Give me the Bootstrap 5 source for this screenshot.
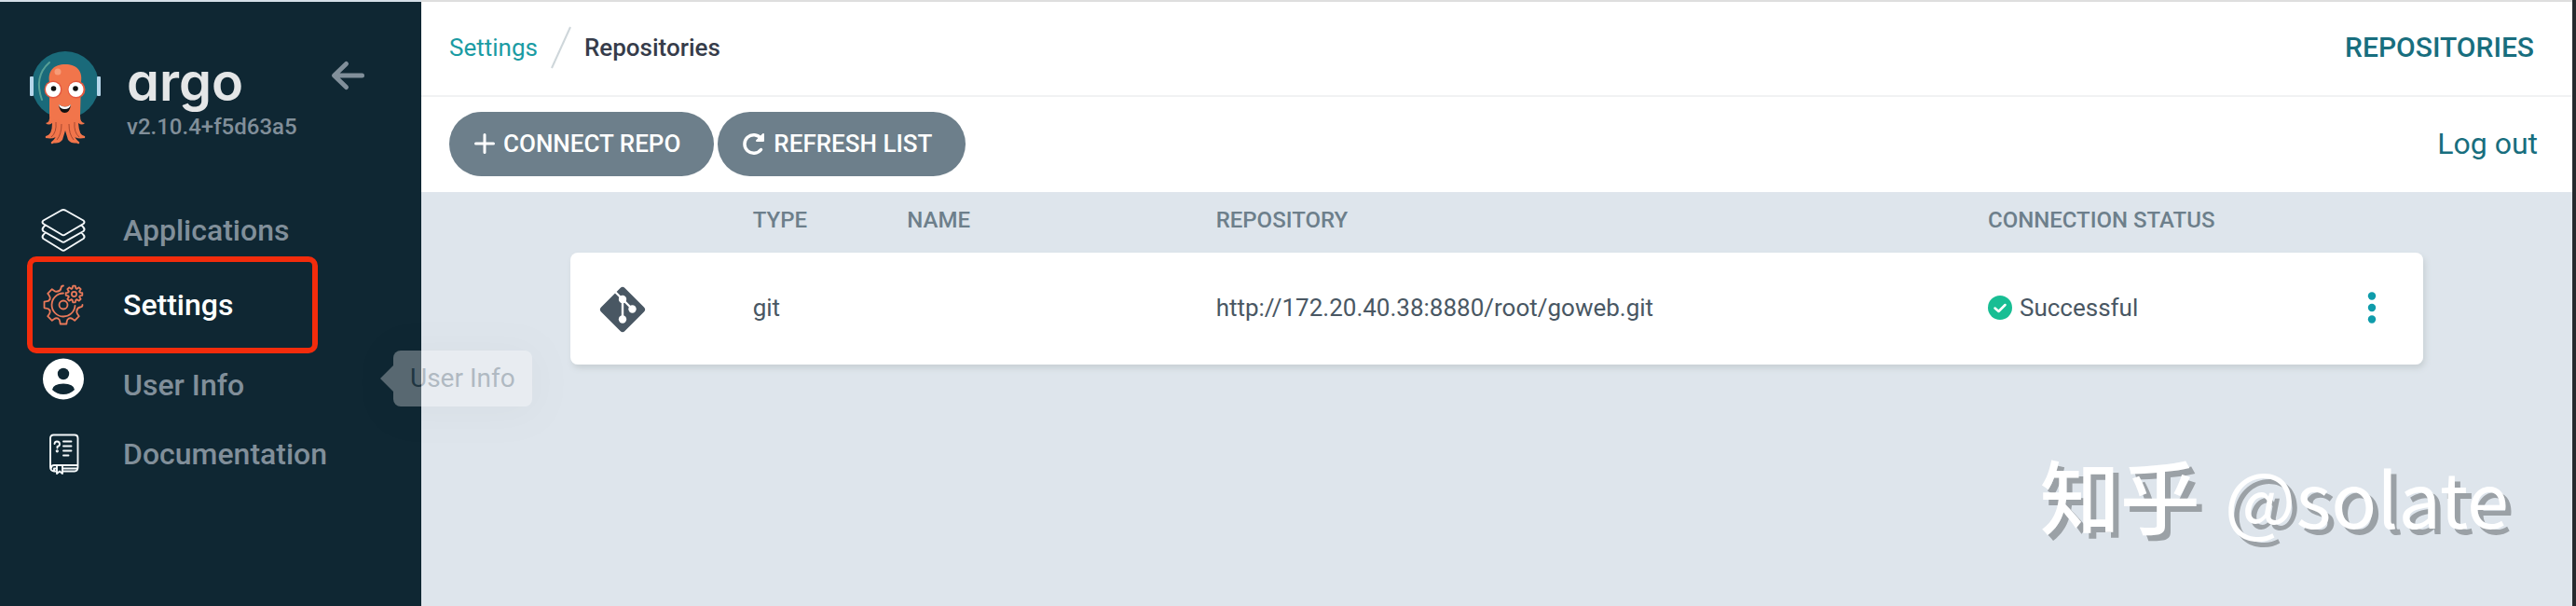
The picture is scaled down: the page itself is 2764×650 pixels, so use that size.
<!DOCTYPE html>
<html lang="en">
<head>
<meta charset="utf-8">
<meta name="viewport" content="width=device-width, initial-scale=1">
<title>Repositories - Argo CD</title>
<link rel="stylesheet" href="https://cdn.jsdelivr.net/npm/bootstrap@5.3.0/dist/css/bootstrap.min.css">
<style>
  body { font-family: Roboto, "Noto Sans CJK SC", sans-serif; font-size: 26px; line-height: 32px; color: #495763; background: #dee5ec; }
  .app-shell { border-right: 4px solid #262a2e; }
  .sidebar { width: 452px; background: #0f2733; border-top: 2px solid #d5dfe8; }
  .brand { padding: 50px 32px 0; height: 205px; gap: 28px; }
  .wordmark { font: 600 56px/64px Inter, sans-serif; font-feature-settings: "cv11"; color: #e4e6e7; padding-top: 4px; }
  .version { font-size: 24px; font-weight: 500; color: #818f9a; line-height: 32px; }
  .collapse-btn { left: 354px; top: 62px; }
  .side-link { height: 80px; padding-left: 44px; gap: 40px; font-size: 32px; font-weight: 500; color: #818f9a; text-decoration: none; }
  .side-link.active { color: #fff; }
  .side-link svg { width: 48px; height: 48px; }
  .glyph-link span { padding-top: 12px; }
  .marker { left: 29px; top: -12px; width: 312px; height: 104px; border: 6px solid #f32c0c; border-radius: 10px; pointer-events: none; }
  .hint { left: 422px; top: 9px; padding: 12px 18px; height: 60px; line-height: 36px; border-radius: 8px; background: #fff; color: #495763; opacity: .3; font-size: 28px; box-shadow: 0 4px 40px rgba(0,0,0,.1); z-index: 2; }
  .hint::before { content: ""; position: absolute; left: -14px; top: 16px; border: 14px solid transparent; border-left: 0; border-right-color: #fff; }
  .topbar { border-top: 2px solid #dedede; }
  .bar-row { background: #fff; height: 102px; padding: 0 37px 2px 30px; }
  .bar-row.crumbs { border-bottom: 2px solid #f1f2f3; padding-right: 41px; }
  .crumbs nav { gap: 14px; }
  .crumbs a { color: #1a9ba3; text-decoration: none; }
  .crumbs .here { color: #363c4a; font-weight: 500; }
  .page-name { font-size: 30px; font-weight: 500; color: #186e7e; }
  .logout { font-size: 32px; color: #186e7e; text-decoration: none; }
  .btn-argo { --bs-btn-color: #fff; --bs-btn-bg: #6d7f8b; --bs-btn-border-width: 0; --bs-btn-hover-color: #fff; --bs-btn-hover-bg: #5d6f7b; height: 69px; padding: 0 36px 0 26px; font-size: 26px; font-weight: 500; gap: 8px; }
  .content { padding: 0 160px; }
  .repos { table-layout: fixed; border-collapse: separate; border-spacing: 0; }
  .repos th { height: 65px; padding: 0 30px 6px; font-size: 24px; font-weight: 500; color: #6d7f8b; }
  .repos td { height: 120px; padding: 0 30px 2px; background: #fff; }
  .repos td:first-child { padding: 2px 31px 0; border-radius: 8px 0 0 8px; }
  .repos td:last-child { border-radius: 0 8px 8px 0; }
  .repos tbody tr { border-radius: 8px; box-shadow: 2px 4px 6px #c8d0d4; }
  .c1 { width: 8.3333%; } .c2 { width: 16.6667%; } .c5 { width: 41.6667%; } .c3 { width: 25%; }
  .kebab { padding: 0 20px; }
  .stamp { right: 68px; bottom: 58px; gap: 26px; font: 400 81px/120px "Noto Sans CJK SC", sans-serif; color: #fff; text-shadow: 6px 6px 0 #9ba1a6; }
  .stamp-site { font-size: 86px; font-weight: 500; }
</style>
</head>
<body>
<div class="app-shell d-flex min-vh-100 position-relative">
  <aside class="sidebar flex-shrink-0 position-relative">
    <div class="brand d-flex align-items-start">
      <svg width="76" height="104" viewBox="32 52 76 104" aria-label="Argo mascot">
        <circle cx="70" cy="91" r="36" fill="#1a6a7a"/>
        <rect x="32" y="82" width="4" height="21" rx="1" fill="#b6d6ea"/>
        <rect x="104" y="82" width="4" height="21" rx="1" fill="#b6d6ea"/>
        <path d="M53 67Q36 82 45 107" fill="none" stroke="#58a096" stroke-width="2" stroke-linecap="round"/>
        <path d="M53 88C51 76 58 69 70 69S89 76 87 88L86 124Q86 132 91 132Q88 135 84 132Q85 146 91 147Q87 150 80 147Q82 152 84 153Q77 155 73 150L70 140L67 150Q63 155 56 153Q60 151 60 147Q53 150 49 147Q56 145 56 132Q52 135 49 132Q54 131 53 124Z" fill="#f1754b"/>
        <path d="M58 130Q59 145 50 147M63 130Q64 148 56 153M77 130Q76 148 84 153M82 130Q81 145 90 147" fill="none" stroke="#f1754b" stroke-width="2.5" stroke-linecap="round"/>
        <path d="M60 131Q61 142 55 147M66 133Q66 144 61 150M74 133Q74 144 79 150M80 131Q79 142 85 147" fill="none" stroke="#a8482f" stroke-width="1"/>
        <circle cx="62" cy="77" r="3.5" fill="#f79b77"/>
        <circle cx="57" cy="96" r="9.500" fill="#e4583f"/><circle cx="82" cy="96" r="9.500" fill="#e4583f"/>
        <circle cx="57" cy="96" r="8" fill="#fff"/><circle cx="81.500" cy="96" r="8" fill="#fff"/>
        <circle cx="57.500" cy="95" r="2.800" fill="#111"/><circle cx="81" cy="95" r="2.800" fill="#111"/>
        <path d="M63 112Q70 117 76 112Q75 121 69.500 121Q64 121 63 112Z" fill="#111"/>
        <path d="M63 112Q70 117 76 112Q75 117 69.500 117Q64 117 63 112Z" fill="#fff"/>
      </svg>
      <div class="d-flex flex-column">
        <span class="wordmark">argo</span>
        <span class="version">v2.10.4+f5d63a5</span>
      </div>
      <button type="button" class="btn p-0 border-0 collapse-btn position-absolute lh-1" aria-label="Collapse sidebar">
        <svg width="38" height="34" viewBox="0 0 38 34" fill="none" stroke="#818f9a" stroke-width="5" stroke-linecap="round" stroke-linejoin="round"><path d="M17.500 4.500L4.500 17L17.500 29.500M5 17H34.500"/></svg>
      </button>
    </div>
    <nav>
      <a href="#" class="side-link d-flex align-items-center">
        <svg viewBox="0 0 48 48" fill="none" stroke="#f4f8fa" stroke-width="2" stroke-linejoin="round"><path d="M22 2.500Q24 1.500 26 2.500L45.500 13.500Q47.500 15 45.500 17L26 28.500Q24 30 22 28.500L2.500 17Q.5 15 2.500 13.500ZM4.500 18.200L2.500 21Q.7 23 2.500 25L22 36Q24 37.500 26 36L45.500 25Q47.500 23 45.500 21L43.500 18.200M4.500 26.500L2.500 29Q.7 31 2.500 33L22 45Q24 46.500 26 45L45.500 33Q47.500 31 45.500 29L43.500 26.500"/></svg>
        <span>Applications</span>
      </a>
      <div class="position-relative">
        <a href="#" class="side-link active d-flex align-items-center" aria-current="page">
          <svg viewBox="-24 -24 48 48" fill="none" stroke="#e9795a" stroke-width="1.800" stroke-linecap="round" stroke-linejoin="round">
            <defs>
              <path id="tooth" vector-effect="non-scaling-stroke" d="M-6 -14.500Q-4 -15.500 -3.800 -17.500L-3.300 -20.500H3.300L3.800 -17.500Q4 -15.500 6 -14.500"/>
              <path id="cog-tooth" vector-effect="non-scaling-stroke" d="M-6.500 -13.500L-4 -15.500L-3 -20.500H3L4 -15.500L6.500 -13.500"/>
            </defs>
            <use href="#tooth" transform="rotate(135)"/><use href="#tooth" transform="rotate(180)"/><use href="#tooth" transform="rotate(225)"/><use href="#tooth" transform="rotate(270)"/><use href="#tooth" transform="rotate(315)"/>
            <path d="M-6 -14.500Q-3 -15 -2.500 -18Q-2.300 -20.500 0 -20.500M14.500 6Q15 3 18 2.500Q20.500 2.300 20.500 0"/>
            <path d="M0 -12.500A12.500 12.500 0 1 0 12.500 1"/>
            <circle r="4.500"/>
            <g transform="translate(11.500 -11.500) scale(.43)">
              <use href="#cog-tooth"/><use href="#cog-tooth" transform="rotate(45)"/><use href="#cog-tooth" transform="rotate(90)"/><use href="#cog-tooth" transform="rotate(135)"/><use href="#cog-tooth" transform="rotate(180)"/><use href="#cog-tooth" transform="rotate(225)"/><use href="#cog-tooth" transform="rotate(270)"/><use href="#cog-tooth" transform="rotate(315)"/>
              <circle r="6" vector-effect="non-scaling-stroke"/>
            </g>
          </svg>
          <span>Settings</span>
        </a>
        <div class="marker position-absolute"></div>
      </div>
      <div class="position-relative">
        <a href="#" class="side-link glyph-link d-flex align-items-center">
          <svg viewBox="0 0 48 48"><circle cx="24" cy="23.500" r="22" fill="#fff"/><circle cx="24" cy="18" r="6.200" fill="#0f2733"/><path d="M12 35Q13 28.500 24 28.500T36 35Q31 40 24 40T12 35Z" fill="#0f2733"/></svg>
          <span>User Info</span>
        </a>
        <div class="hint position-absolute text-nowrap" role="tooltip">User Info</div>
      </div>
      <a href="#" class="side-link d-flex align-items-center">
        <svg viewBox="0 0 48 48" fill="none" stroke="#f4f8fa" stroke-width="1.900" stroke-linecap="round" stroke-linejoin="round"><path d="M17 42.500H14Q10 42 10 38V7Q10 3.500 13.500 3.500H36Q39.500 3.500 39.500 7V38Q39.500 42.500 36 42.500H23M39 36H14Q11 36 11 39M17 42.500H14V39.500H17M23 39.500H39M17 36V45L20 42.500L23 45V36M14.500 13Q15 10.500 17 10.500Q20 10.500 20 13.500Q20 15.500 17.500 16V17.500M24 10.500H32.500M24 15.500H32.500M24 20.500H32.500M24 25.500H29.500"/><circle cx="17.300" cy="20.800" r=".7"/></svg>
        <span>Documentation</span>
      </a>
    </nav>
  </aside>

  <main class="flex-grow-1">
    <header class="topbar">
      <div class="bar-row crumbs d-flex align-items-center justify-content-between">
        <nav class="d-flex align-items-center" aria-label="breadcrumb">
          <a href="#">Settings</a>
          <svg width="22" height="46" viewBox="0 0 22 46"><path d="M1 45L21 1" stroke="#ced6da" stroke-width="2"/></svg>
          <span class="here">Repositories</span>
        </nav>
        <span class="page-name">REPOSITORIES</span>
      </div>
      <div class="bar-row d-flex align-items-center justify-content-between">
        <div class="d-flex gap-1">
          <button type="button" class="btn btn-argo rounded-pill d-flex align-items-center">
            <svg width="24" height="24" viewBox="0 0 24 24" stroke="#fff" stroke-width="3" stroke-linecap="round"><path d="M12 2.500V21.500M2.500 12H21.500"/></svg>
            CONNECT REPO
          </button>
          <button type="button" class="btn btn-argo rounded-pill d-flex align-items-center">
            <svg width="26" height="26" viewBox="0 0 26 26" fill="none" stroke="#fff" stroke-width="3.500" stroke-linecap="round"><path d="M20.500 19.500A9.800 9.800 0 1 1 20.500 7.500"/><path d="M23 3V10H16Z" fill="#fff" stroke-width="2" stroke-linejoin="round"/></svg>
            REFRESH LIST
          </button>
        </div>
        <a href="#" class="logout">Log out</a>
      </div>
    </header>

    <section class="content">
      <table class="repos w-100">
        <thead>
          <tr><th class="c1" aria-label="Icon"></th><th class="c1">TYPE</th><th class="c2">NAME</th><th class="c5">REPOSITORY</th><th class="c3 text-nowrap">CONNECTION STATUS</th></tr>
        </thead>
        <tbody>
          <tr>
            <td>
              <svg class="d-block" width="50" height="50" viewBox="-25 -25 50 50" aria-label="git">
                <rect x="-18" y="-18" width="36" height="36" rx="3.500" transform="rotate(45)" fill="#495763"/>
                <path d="M-7.500 -18.500L10 -1M0 -11V10" stroke="#fff" stroke-width="2.400"/>
                <circle cy="-11" r="4.200" fill="#fff"/><circle cx="10.500" cy="-.5" r="4.200" fill="#fff"/><circle cy="10.500" r="4.200" fill="#fff"/>
              </svg>
            </td>
            <td>git</td>
            <td></td>
            <td>http://172.20.40.38:8880/root/goweb.git</td>
            <td>
              <div class="d-flex align-items-center justify-content-between">
                <span class="d-flex align-items-center gap-2">
                  <svg width="26" height="26" viewBox="0 0 26 26"><circle cx="13" cy="13" r="13" fill="#18be94"/><path d="M7.500 13.500L11.500 17L18.500 10" fill="none" stroke="#fff" stroke-width="2.500" stroke-linecap="round" stroke-linejoin="round"/></svg>
                  Successful
                </span>
                <button type="button" class="btn border-0 kebab lh-1" aria-label="Repository actions">
                  <svg width="10" height="36" viewBox="0 0 10 36" fill="#0f9cab"><circle cx="5" cy="5.500" r="4.200"/><circle cx="5" cy="18" r="4.200"/><circle cx="5" cy="30.500" r="4.200"/></svg>
                </button>
              </div>
            </td>
          </tr>
        </tbody>
      </table>
    </section>
  </main>
  <div class="stamp position-absolute text-nowrap d-flex align-items-baseline"><span class="stamp-site">知乎</span><span>@solate</span></div>
</div>
<script src="https://cdn.jsdelivr.net/npm/bootstrap@5.3.0/dist/js/bootstrap.bundle.min.js"></script>
</body>
</html>
